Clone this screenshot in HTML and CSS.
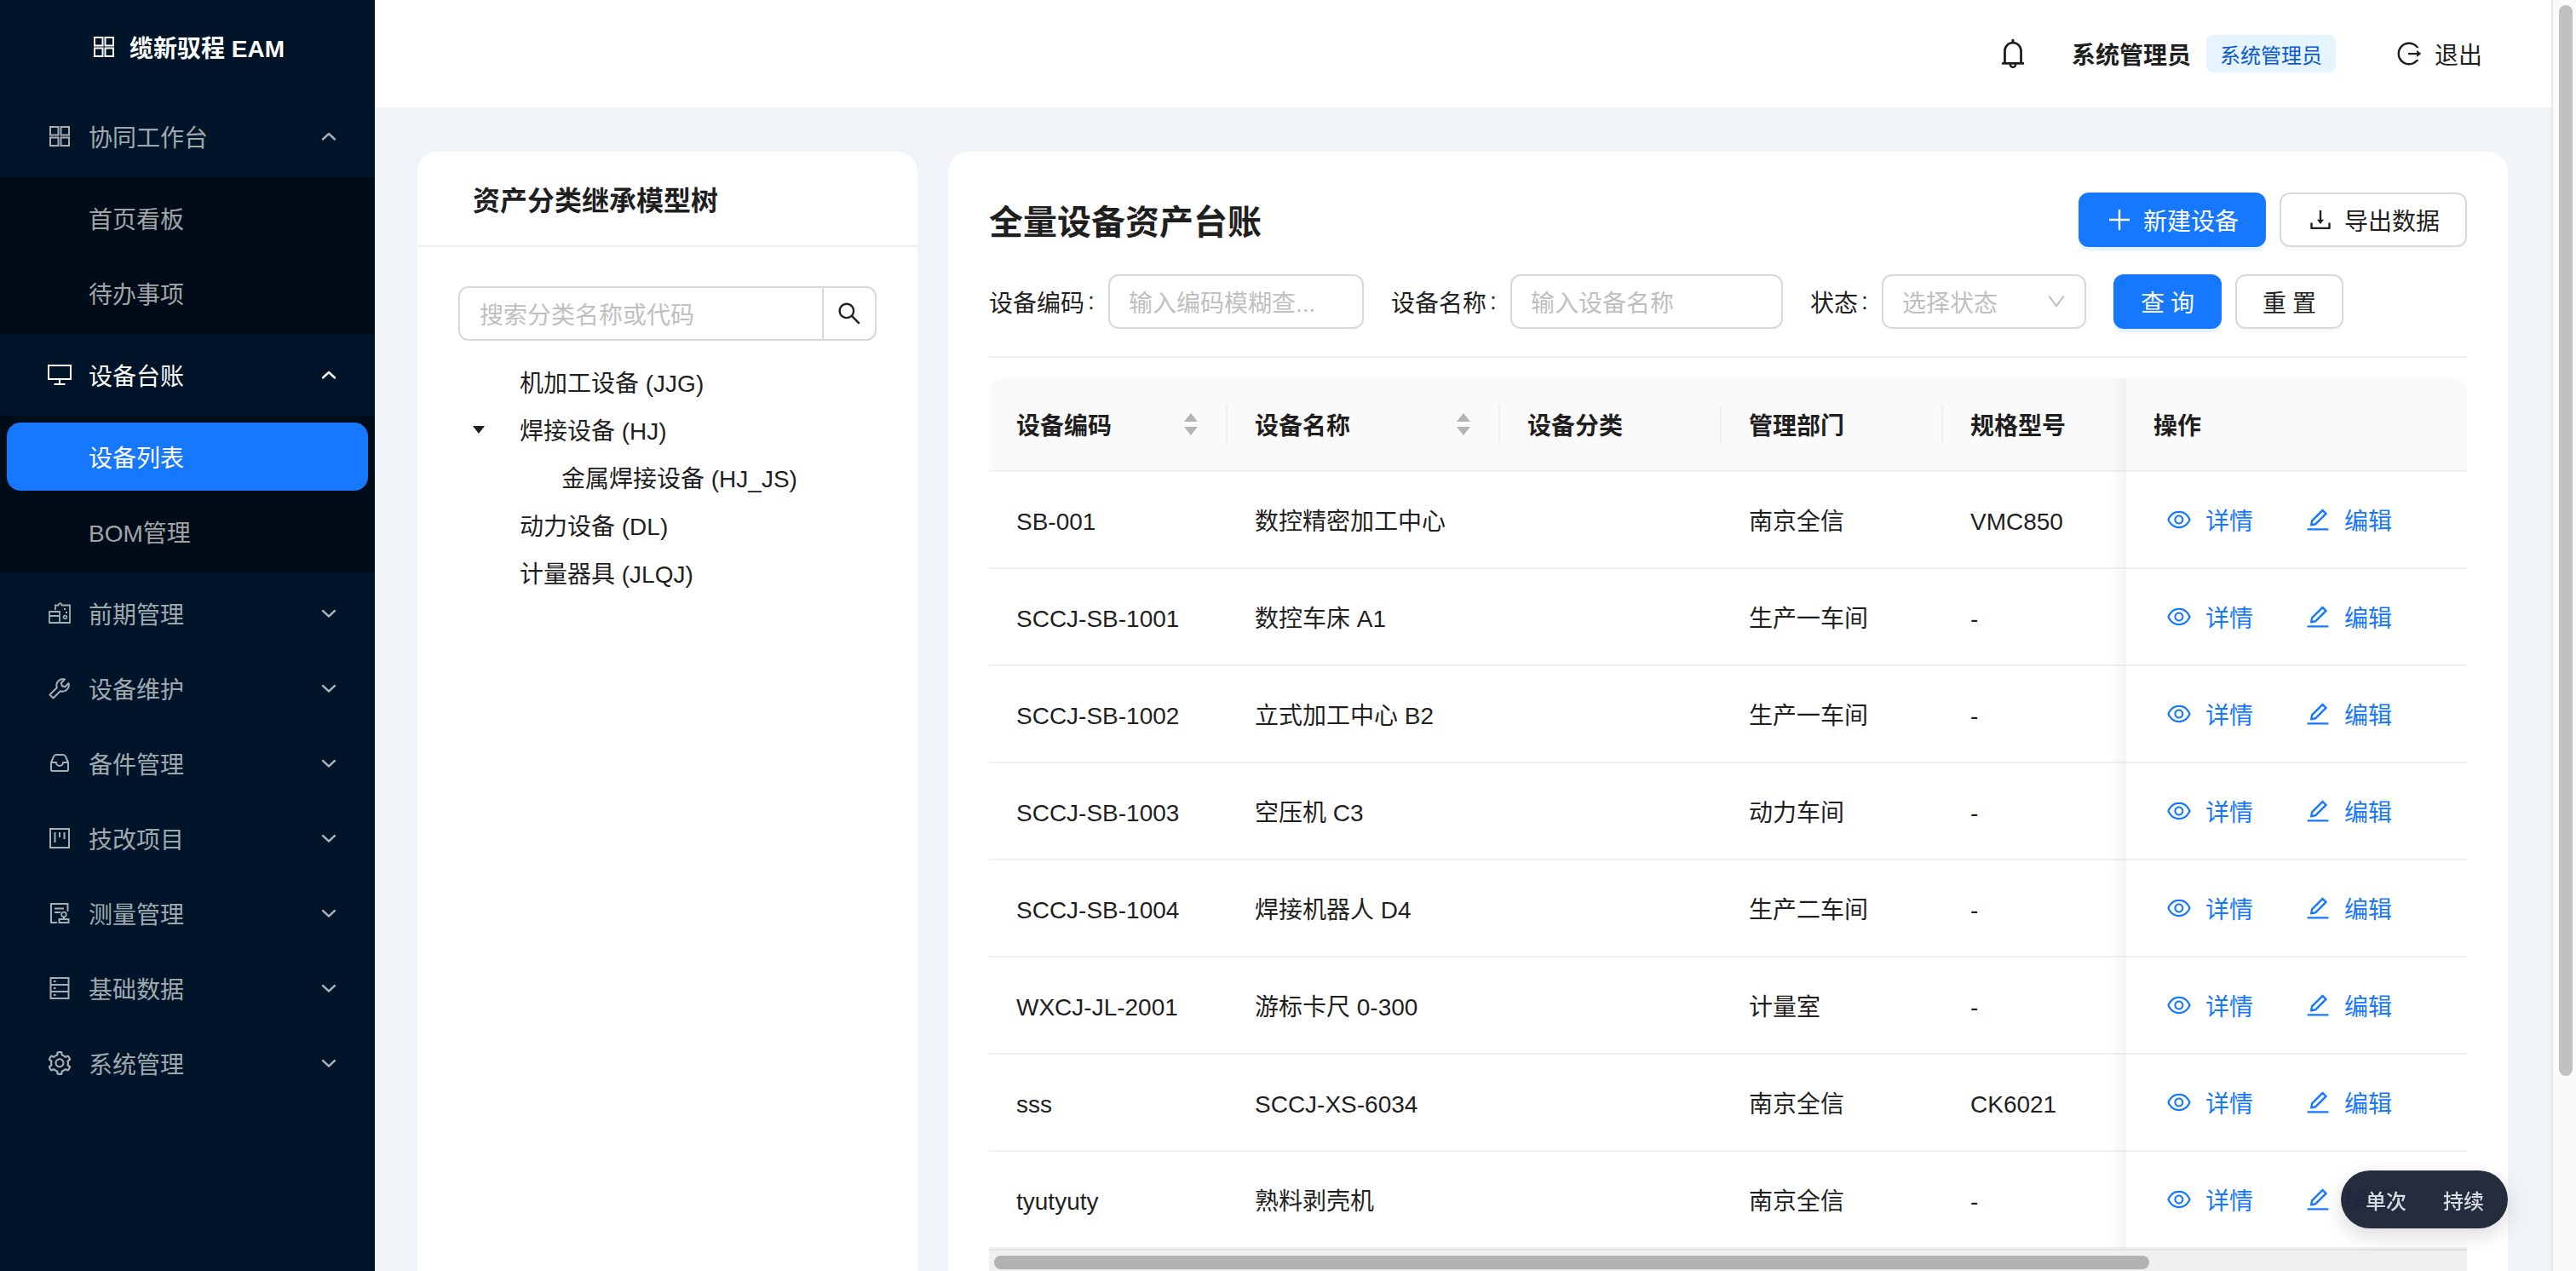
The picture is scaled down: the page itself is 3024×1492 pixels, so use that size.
FILE: index.html
```html
<!DOCTYPE html>
<html lang="zh-CN">
<head>
  <meta charset="UTF-8">
  <meta name="viewport" content="width=device-width, initial-scale=1.0">
  <title>缆新驭程 EAM</title>
  <link rel="stylesheet" href="styles.css">
</head>
<body>

  <!-- icon sprite -->
  <svg class="sprite" xmlns="http://www.w3.org/2000/svg">
    <symbol id="i-app" viewBox="-2 -2 32 32"><path fill="none" stroke="currentColor" stroke-width="2" d="M3 3h9.500v9.500H3zM15.500 3H25v9.500h-9.500zM3 15.500h9.500V25H3zM15.500 15.500H25V25h-9.500z"/></symbol>
    <symbol id="i-desktop" viewBox="-2 -2 32 32"><path fill="none" stroke="currentColor" stroke-width="2" d="M1 3h26v16H1zM14 19v6M7.500 25h13"/></symbol>
    <symbol id="i-recon" viewBox="-2 -2 32 32"><path fill="none" stroke="currentColor" stroke-width="1.800" d="M9 10V4.500h3.500a2 2 0 0 1 3.500-1.500 2 2 0 0 1 .5 1.500H26V25H14M2 12h12v13H2zM2 17h12"/><circle cx="20.500" cy="18.500" r="2" fill="none" stroke="currentColor" stroke-width="1.600"/><path fill="none" stroke="currentColor" stroke-width="2" d="M19 9h2M21 13h2"/></symbol>
    <symbol id="i-tool" viewBox="-2 -2 32 32"><path fill="none" stroke="currentColor" stroke-width="2" stroke-linejoin="round" d="M20 3.500A7.500 7.500 0 0 0 10.800 13.200L2.500 21.500l4 4 8.300-8.300A7.500 7.500 0 0 0 24.500 8l-4.200 4.200-3.500-1-1-3.500z"/></symbol>
    <symbol id="i-inbox" viewBox="-2 -2 32 32"><path fill="none" stroke="currentColor" stroke-width="2" stroke-linejoin="round" d="M4 13l3-7q1-2 3-2h8q2 0 3 2l3 7v8.500q0 1.500-1.500 1.500h-17Q4 23 4 21.500zM4 13h6a4 4 0 0 0 8 0h6"/></symbol>
    <symbol id="i-project" viewBox="-2 -2 32 32"><path fill="none" stroke="currentColor" stroke-width="2" d="M3 3h22v22H3zM8.500 7v12M14 7v6M19.500 7v8"/></symbol>
    <symbol id="i-audit" viewBox="-2 -2 32 32"><path fill="none" stroke="currentColor" stroke-width="2" d="M23.500 12V3H4v22h7M8 8.500h11M8 13h7"/><circle cx="19" cy="15.500" r="2.800" fill="none" stroke="currentColor" stroke-width="1.800"/><path fill="none" stroke="currentColor" stroke-width="2" d="M19 18.500V21M13.500 21h11v4h-11z"/></symbol>
    <symbol id="i-hdd" viewBox="-2 -2 32 32"><path fill="none" stroke="currentColor" stroke-width="2" d="M3.500 2h21v24h-21zM3.500 10h21M3.500 18h21M7 6h2.500M7 14h2.500M7 22h2.500"/></symbol>
    <symbol id="i-gear" viewBox="0 0 1024 1024"><path fill="currentColor" d="M924.8 625.7l-65.5-56c3.1-19 4.700-38.400 4.700-57.800s-1.600-38.800-4.700-57.800l65.500-56a32.030 32.030 0 0 0 9.300-35.200l-.9-2.600a443.740 443.740 0 0 0-79.700-137.900l-1.800-2.100a32.120 32.120 0 0 0-35.100-9.500l-81.300 28.900c-30-24.600-63.500-44-99.700-57.600l-15.700-85a32.050 32.050 0 0 0-25.800-25.700l-2.700-.5c-52.100-9.400-106.900-9.400-159 0l-2.700.5a32.050 32.050 0 0 0-25.800 25.700l-15.800 85.400a351.860 351.860 0 0 0-99 57.400l-81.900-29.100a32 32 0 0 0-35.100 9.500l-1.800 2.100a446.020 446.020 0 0 0-79.700 137.900l-.9 2.600c-4.500 12.500-.8 26.500 9.300 35.200l66.300 56.600c-3.100 18.800-4.600 38-4.600 57.100 0 19.200 1.500 38.400 4.600 57.100L99 625.500a32.030 32.030 0 0 0-9.300 35.200l.9 2.600c18.100 50.400 44.900 96.900 79.700 137.900l1.800 2.100a32.120 32.120 0 0 0 35.100 9.500l81.900-29.100c29.800 24.500 63.100 43.900 99 57.400l15.800 85.400a32.050 32.050 0 0 0 25.800 25.700l2.700.5a449.400 449.400 0 0 0 159 0l2.700-.5a32.050 32.050 0 0 0 25.800-25.700l15.700-85a350 350 0 0 0 99.700-57.600l81.300 28.900a32 32 0 0 0 35.100-9.500l1.800-2.100c34.800-41.100 61.600-87.500 79.700-137.900l.9-2.600c4.500-12.300.8-26.300-9.300-35zM788.300 465.900c2.500 15.100 3.800 30.600 3.800 46.100s-1.300 31-3.800 46.100l-6.600 40.100 74.700 63.900a370.030 370.030 0 0 1-42.600 73.600L721 702.800l-31.400 25.800c-23.900 19.600-50.500 35-79.300 45.800l-38.100 14.300-17.900 97a377.500 377.500 0 0 1-85 0l-17.900-97.200-37.800-14.500c-28.500-10.800-55-26.200-78.700-45.700l-31.400-25.900-93.400 33.200c-17-22.900-31.200-47.600-42.600-73.600l75.500-64.500-6.500-40c-2.400-14.900-3.700-30.300-3.700-45.500 0-15.300 1.200-30.600 3.700-45.500l6.500-40-75.500-64.500c11.300-26.100 25.600-50.700 42.600-73.600l93.400 33.200 31.400-25.900c23.700-19.500 50.200-34.900 78.700-45.700l37.900-14.300 17.900-97.200c28.100-3.200 56.800-3.200 85 0l17.900 97 38.100 14.300c28.700 10.800 55.400 26.200 79.300 45.800l31.400 25.800 92.800-32.900c17 22.900 31.200 47.600 42.600 73.600L781.800 426l6.500 39.900zM512 326c-97.200 0-176 78.800-176 176s78.800 176 176 176 176-78.800 176-176-78.800-176-176-176zm79.200 255.200A111.600 111.600 0 0 1 512 614c-29.900 0-58-11.700-79.200-32.800A111.600 111.600 0 0 1 400 502c0-29.900 11.700-58 32.800-79.200C454 401.600 482.100 390 512 390c29.900 0 58 11.600 79.200 32.800A111.600 111.600 0 0 1 624 502c0 29.900-11.700 58-32.800 79.200z"/></symbol>
    <symbol id="i-up" viewBox="0 0 20 20"><path fill="none" stroke="currentColor" stroke-width="2.400" stroke-linecap="round" stroke-linejoin="round" d="M3 13.500L10 7l7 6.500"/></symbol>
    <symbol id="i-down" viewBox="0 0 20 20"><path fill="none" stroke="currentColor" stroke-width="2.400" stroke-linecap="round" stroke-linejoin="round" d="M3 7l7 6.500L17 7"/></symbol>
    <symbol id="i-select" viewBox="0 0 1024 1024"><path fill="currentColor" d="M884 256h-75c-5.100 0-9.900 2.500-12.900 6.600L512 654.200 227.900 262.600c-3-4.100-7.800-6.600-12.900-6.600h-75c-6.500 0-10.300 7.400-6.500 12.700l352.600 486.100c12.800 17.600 39 17.600 51.700 0l352.600-486.100c3.900-5.300.1-12.700-6.400-12.700z"/></symbol>
    <symbol id="i-bell" viewBox="0 0 1024 1024"><path fill="currentColor" d="M816 768h-24V428c0-141.100-104.300-257.700-240-277.100V112c0-22.100-17.900-40-40-40s-40 17.900-40 40v38.900c-135.700 19.400-240 136-240 277.100v340h-24c-17.700 0-32 14.300-32 32v32c0 4.400 3.600 8 8 8h216c0 61.800 50.200 112 112 112s112-50.200 112-112h216c4.400 0 8-3.600 8-8v-32c0-17.700-14.300-32-32-32zM512 888c-26.500 0-48-21.500-48-48h96c0 26.500-21.500 48-48 48zM304 768V428c0-55.600 21.600-107.800 60.900-147.100S456.400 220 512 220c55.600 0 107.800 21.600 147.100 60.900S720 372.400 720 428v340H304z"/></symbol>
    <symbol id="i-logout" viewBox="0 0 1024 1024"><path fill="currentColor" d="M868 732h-70.300c-4.800 0-9.300 2.100-12.300 5.800-7 8.500-14.500 16.700-22.400 24.500a353.840 353.840 0 0 1-112.700 75.900A352.800 352.800 0 0 1 512.400 866c-47.900 0-94.300-9.400-137.900-27.800a353.840 353.840 0 0 1-112.700-75.900 353.280 353.280 0 0 1-76-112.500C167.300 606.200 158 559.900 158 512s9.400-94.200 27.800-137.800c17.800-42.100 43.400-80 76-112.500s70.500-58.100 112.700-75.900c43.600-18.400 90-27.800 137.900-27.800 47.900 0 94.300 9.300 137.900 27.800 42.200 17.800 80.100 43.400 112.700 75.900 7.900 7.900 15.300 16.100 22.400 24.500 3 3.700 7.600 5.800 12.300 5.800H868c6.300 0 10.200-7 6.700-12.300C798 160.500 663.800 81.600 511.300 82 271.700 82.600 79.600 277.100 82 516.400 84.400 751.900 276.200 942 512.400 942c152.100 0 285.700-78.800 362.300-197.700 3.400-5.300-.4-12.300-6.700-12.300zm88.900-226.300L815 393.700c-5.300-4.200-13-.4-13 6.300v76H488c-4.400 0-8 3.600-8 8v56c0 4.400 3.600 8 8 8h314v76c0 6.700 7.800 10.500 13 6.300l141.900-112a8 8 0 0 0 0-12.600z"/></symbol>
    <symbol id="i-plus" viewBox="0 0 32 32"><path fill="none" stroke="currentColor" stroke-width="2.400" d="M16 4v24M4 16h24"/></symbol>
    <symbol id="i-download" viewBox="0 0 1024 1024"><path fill="currentColor" d="M505.700 661a8 8 0 0 0 12.600 0l112-141.700c4.100-5.200.4-12.900-6.300-12.900h-74.100V168c0-4.400-3.600-8-8-8h-60c-4.400 0-8 3.600-8 8v338.300H400c-6.700 0-10.400 7.700-6.300 12.900l112 141.800zM878 626h-60c-4.400 0-8 3.600-8 8v154H214V634c0-4.400-3.600-8-8-8h-60c-4.400 0-8 3.600-8 8v198c0 17.700 14.300 32 32 32h684c17.700 0 32-14.300 32-32V634c0-4.400-3.600-8-8-8z"/></symbol>
    <symbol id="i-search" viewBox="0 0 1024 1024"><path fill="currentColor" d="M909.600 854.500L649.900 594.800C690.200 542.700 712 479 712 412c0-80.200-31.300-155.400-87.900-212.100-56.600-56.700-132-87.900-212.100-87.900s-155.500 31.300-212.100 87.900C143.200 256.500 112 331.800 112 412c0 80.100 31.300 155.500 87.900 212.100C256.500 680.800 331.800 712 412 712c67 0 130.600-21.800 182.700-62l259.700 259.600a8.200 8.200 0 0 0 11.600 0l43.600-43.500a8.200 8.200 0 0 0 0-11.600zM570.400 570.400C528 612.700 471.800 636 412 636s-116-23.300-158.400-65.600C211.300 528 188 471.800 188 412s23.300-116.100 65.600-158.400C296 211.300 352.200 188 412 188s116.100 23.200 158.400 65.600S636 352.200 636 412s-23.300 116.100-65.600 158.400z"/></symbol>
    <symbol id="i-eye" viewBox="0 0 1024 1024"><path fill="currentColor" d="M942.200 486.200C847.400 286.500 704.100 186 512 186c-192.200 0-335.400 100.500-430.200 300.300a60.300 60.300 0 0 0 0 51.500C176.600 737.500 319.900 838 512 838c192.200 0 335.400-100.500 430.200-300.300 7.700-16.200 7.700-35 0-51.500zM512 766c-161.300 0-279.400-81.800-362.700-254C232.600 339.800 350.700 258 512 258c161.300 0 279.400 81.800 362.700 254C791.500 684.200 673.400 766 512 766zm-4-430c-97.200 0-176 78.800-176 176s78.800 176 176 176 176-78.800 176-176-78.800-176-176-176zm0 288c-61.900 0-112-50.100-112-112s50.100-112 112-112 112 50.100 112 112-50.100 112-112 112z"/></symbol>
    <symbol id="i-edit" viewBox="0 0 1024 1024"><path fill="currentColor" d="M257.700 752c2 0 4-.2 6-.5L431.900 722c2-.4 3.900-1.300 5.300-2.800l423.900-423.900a9.960 9.960 0 0 0 0-14.100L694.900 114.900c-1.900-1.900-4.400-2.900-7.100-2.900s-5.200 1-7.100 2.900L256.800 538.800c-1.500 1.500-2.400 3.300-2.800 5.300l-29.500 168.200a33.500 33.500 0 0 0 9.400 29.800c6.600 6.400 14.900 9.900 23.800 9.900zm67.400-174.400L687.800 215l73.300 73.300-362.700 362.600-88.900 15.700 15.600-89zM880 836H144c-17.700 0-32 14.300-32 32v36c0 4.400 3.600 8 8 8h784c4.400 0 8-3.600 8-8v-36c0-17.700-14.300-32-32-32z"/></symbol>
  </svg>

  <div class="app">

    <aside class="sidebar">
      <div class="logo"><svg class="icon"><use href="#i-app"/></svg><span>缆新驭程 EAM</span></div>

      <div class="menu-item"><svg class="icon"><use href="#i-app"/></svg><span>协同工作台</span><svg class="arrow"><use href="#i-up"/></svg></div>
      <div class="submenu">
        <div class="sub-item">首页看板</div>
        <div class="sub-item">待办事项</div>
      </div>

      <div class="menu-item open"><svg class="icon"><use href="#i-desktop"/></svg><span>设备台账</span><svg class="arrow"><use href="#i-up"/></svg></div>
      <div class="submenu">
        <div class="sub-item active">设备列表</div>
        <div class="sub-item">BOM管理</div>
      </div>

      <div class="menu-item"><svg class="icon"><use href="#i-recon"/></svg><span>前期管理</span><svg class="arrow"><use href="#i-down"/></svg></div>
      <div class="menu-item"><svg class="icon"><use href="#i-tool"/></svg><span>设备维护</span><svg class="arrow"><use href="#i-down"/></svg></div>
      <div class="menu-item"><svg class="icon"><use href="#i-inbox"/></svg><span>备件管理</span><svg class="arrow"><use href="#i-down"/></svg></div>
      <div class="menu-item"><svg class="icon"><use href="#i-project"/></svg><span>技改项目</span><svg class="arrow"><use href="#i-down"/></svg></div>
      <div class="menu-item"><svg class="icon"><use href="#i-audit"/></svg><span>测量管理</span><svg class="arrow"><use href="#i-down"/></svg></div>
      <div class="menu-item"><svg class="icon"><use href="#i-hdd"/></svg><span>基础数据</span><svg class="arrow"><use href="#i-down"/></svg></div>
      <div class="menu-item"><svg class="icon"><use href="#i-gear"/></svg><span>系统管理</span><svg class="arrow"><use href="#i-down"/></svg></div>
    </aside>

    <div class="main">
      <header class="topbar">
        <svg class="bell"><use href="#i-bell"/></svg>
        <span class="user-name">系统管理员</span>
        <span class="role-tag">系统管理员</span>
        <span class="logout"><svg class="icon"><use href="#i-logout"/></svg>退出</span>
      </header>

      <div class="content">
        <section class="card tree-card">
          <div class="tree-title">资产分类继承模型树</div>
          <div class="tree-body">
            <div class="tree-search">
              <span class="tree-search-text">搜索分类名称或代码</span>
              <span class="tree-search-btn"><svg class="icon"><use href="#i-search"/></svg></span>
            </div>
            <div class="tree-row">机加工设备 (JJG)</div>
            <div class="tree-row"><span class="caret"></span>焊接设备 (HJ)</div>
            <div class="tree-row child">金属焊接设备 (HJ_JS)</div>
            <div class="tree-row">动力设备 (DL)</div>
            <div class="tree-row">计量器具 (JLQJ)</div>
          </div>
        </section>

        <section class="card ledger-card">
          <div class="ledger-head">
            <h1>全量设备资产台账</h1>
            <div class="ledger-actions">
              <button class="btn primary"><svg class="icon"><use href="#i-plus"/></svg>新建设备</button>
              <button class="btn"><svg class="icon"><use href="#i-download"/></svg>导出数据</button>
            </div>
          </div>

          <div class="filters">
            <label class="field">设备编码<i>:</i></label>
            <span class="input code-input">输入编码模糊查...</span>
            <label class="field">设备名称<i>:</i></label>
            <span class="input name-input">输入设备名称</span>
            <label class="field">状态<i>:</i></label>
            <span class="input status-input">选择状态<svg class="select-arrow"><use href="#i-select"/></svg></span>
            <button class="btn primary spaced">查询</button>
            <button class="btn spaced">重置</button>
          </div>

          <table class="ledger">
            <colgroup>
              <col class="c-code"><col class="c-name"><col class="c-cat"><col class="c-dept"><col class="c-spec"><col class="c-ops">
            </colgroup>
            <thead>
              <tr>
                <th class="split"><div class="th-sort">设备编码<span class="sorter"><b class="up"></b><b class="dn"></b></span></div></th>
                <th class="split"><div class="th-sort">设备名称<span class="sorter"><b class="up"></b><b class="dn"></b></span></div></th>
                <th class="split">设备分类</th>
                <th class="split">管理部门</th>
                <th>规格型号</th>
                <th class="ops">操作</th>
              </tr>
            </thead>
            <tbody>
              <tr><td>SB-001</td><td>数控精密加工中心</td><td></td><td>南京全信</td><td>VMC850</td><td class="ops"><a class="act"><svg class="icon"><use href="#i-eye"/></svg>详情</a><a class="act"><svg class="icon"><use href="#i-edit"/></svg>编辑</a></td></tr>
              <tr><td>SCCJ-SB-1001</td><td>数控车床 A1</td><td></td><td>生产一车间</td><td>-</td><td class="ops"><a class="act"><svg class="icon"><use href="#i-eye"/></svg>详情</a><a class="act"><svg class="icon"><use href="#i-edit"/></svg>编辑</a></td></tr>
              <tr><td>SCCJ-SB-1002</td><td>立式加工中心 B2</td><td></td><td>生产一车间</td><td>-</td><td class="ops"><a class="act"><svg class="icon"><use href="#i-eye"/></svg>详情</a><a class="act"><svg class="icon"><use href="#i-edit"/></svg>编辑</a></td></tr>
              <tr><td>SCCJ-SB-1003</td><td>空压机 C3</td><td></td><td>动力车间</td><td>-</td><td class="ops"><a class="act"><svg class="icon"><use href="#i-eye"/></svg>详情</a><a class="act"><svg class="icon"><use href="#i-edit"/></svg>编辑</a></td></tr>
              <tr><td>SCCJ-SB-1004</td><td>焊接机器人 D4</td><td></td><td>生产二车间</td><td>-</td><td class="ops"><a class="act"><svg class="icon"><use href="#i-eye"/></svg>详情</a><a class="act"><svg class="icon"><use href="#i-edit"/></svg>编辑</a></td></tr>
              <tr><td>WXCJ-JL-2001</td><td>游标卡尺 0-300</td><td></td><td>计量室</td><td>-</td><td class="ops"><a class="act"><svg class="icon"><use href="#i-eye"/></svg>详情</a><a class="act"><svg class="icon"><use href="#i-edit"/></svg>编辑</a></td></tr>
              <tr><td>sss</td><td>SCCJ-XS-6034</td><td></td><td>南京全信</td><td>CK6021</td><td class="ops"><a class="act"><svg class="icon"><use href="#i-eye"/></svg>详情</a><a class="act"><svg class="icon"><use href="#i-edit"/></svg>编辑</a></td></tr>
              <tr><td>tyutyuty</td><td>熟料剥壳机</td><td></td><td>南京全信</td><td>-</td><td class="ops"><a class="act"><svg class="icon"><use href="#i-eye"/></svg>详情</a><a class="act"><svg class="icon"><use href="#i-edit"/></svg>编辑</a></td></tr>
            </tbody>
          </table>
          <div class="table-scroll"><div class="table-thumb"></div></div>
        </section>
      </div>
    </div>

    <div class="page-scroll"><div class="page-thumb"></div></div>
  </div>

  <div class="float-pill"><span>单次</span><span>持续</span></div>

</body>
</html>
```

FILE: styles.css
```css
* {
  box-sizing: border-box;
}

body {
  margin: 0;
  height: 100vh;
  overflow: hidden;
  font-family: "Liberation Sans", "Noto Sans CJK SC", sans-serif;
  font-size: 28px;
  color: #1f1f1f;
  background-color: #f0f3f8;
}

.sprite {
  display: none;
}

.icon {
  width: 32px;
  height: 32px;
  flex-shrink: 0;
}

.app {
  display: flex;
  height: 100vh;
}

/* sidebar */
.sidebar {
  width: 440px;
  flex-shrink: 0;
  background-color: #001529;
  color: rgba(255, 255, 255, 0.65);
}

.logo {
  height: 112px;
  padding-bottom: 2px;
  display: flex;
  align-items: center;
  justify-content: center;
  gap: 14px;
  color: #fff;
  font-weight: 600;
}

.menu-item {
  height: 80px;
  margin: 8px 8px;
  padding: 0 36px 0 46px;
  display: flex;
  align-items: center;
  gap: 18px;
}

.menu-item.open {
  color: #fff;
}

.menu-item .arrow {
  width: 20px;
  height: 20px;
  margin-left: auto;
}

.submenu {
  background-color: #000c17;
  padding: 8px 0;
}

.sub-item {
  height: 80px;
  margin: 0 8px 8px;
  padding-left: 96px;
  display: flex;
  align-items: center;
  border-radius: 16px;
}

.sub-item:last-child {
  margin-bottom: 0;
}

.sub-item.active {
  background-color: #1677ff;
  color: #fff;
}

/* top bar */
.main {
  flex: 1;
  min-width: 0;
  display: flex;
  flex-direction: column;
}

.topbar {
  height: 126px;
  flex-shrink: 0;
  background-color: #fff;
  display: flex;
  align-items: center;
  padding-right: 81px;
  justify-content: flex-end;
}

.bell {
  width: 40px;
  height: 40px;
  margin-right: 49px;
}

.user-name {
  font-weight: 600;
  margin-right: 18px;
}

.role-tag {
  height: 44px;
  padding: 0 16px;
  display: flex;
  align-items: center;
  font-size: 24px;
  color: #0958d9;
  background-color: #e6f4ff;
  border-radius: 8px;
  margin-right: 70px;
}

.logout {
  display: flex;
  align-items: center;
  gap: 14px;
}

/* content */
.content {
  flex: 1;
  min-height: 0;
  display: flex;
  gap: 36px;
  padding: 52px 51px 0 50px;
  overflow: hidden;
}

.card {
  background-color: #fff;
  border-radius: 24px 24px 0 0;
  height: 1400px;
}

.tree-card {
  width: 587px;
  flex-shrink: 0;
}

.tree-title {
  height: 112px;
  padding-left: 65px;
  display: flex;
  align-items: center;
  font-size: 32px;
  font-weight: 600;
  border-bottom: 2px solid #f0f0f0;
}

.tree-body {
  padding: 46px 48px;
}

.tree-search {
  height: 64px;
  display: flex;
  align-items: center;
  border: 2px solid #d9d9d9;
  border-radius: 12px;
  margin-bottom: 20px;
}

.tree-search-text {
  flex: 1;
  padding-left: 23px;
  color: #bfbfbf;
}

.tree-search-btn {
  width: 62px;
  height: 100%;
  display: flex;
  align-items: center;
  justify-content: center;
  border-left: 2px solid #d9d9d9;
}

.tree-row {
  height: 56px;
  padding-left: 72px;
  display: flex;
  align-items: center;
  position: relative;
}

.tree-row.child {
  padding-left: 121px;
}

.caret {
  position: absolute;
  left: 17px;
  top: 24px;
  border-left: 7px solid transparent;
  border-right: 7px solid transparent;
  border-top: 9px solid #1f1f1f;
}

/* ledger */
.ledger-card {
  flex: 1;
  min-width: 0;
  padding: 48px;
}

.ledger-head {
  display: flex;
  align-items: center;
  justify-content: space-between;
  height: 64px;
  margin-bottom: 32px;
}

.ledger-head h1 {
  margin: 0;
  font-size: 40px;
  font-weight: 600;
}

.ledger-actions {
  display: flex;
  gap: 16px;
}

.btn {
  height: 64px;
  padding: 0 30px;
  display: inline-flex;
  align-items: center;
  gap: 12px;
  font-family: inherit;
  font-size: 28px;
  color: #1f1f1f;
  background-color: #fff;
  border: 2px solid #d9d9d9;
  border-radius: 12px;
  box-shadow: 0 4px 0 rgba(0, 0, 0, 0.02);
}

.btn.primary {
  color: #fff;
  background-color: #1677ff;
  border-color: #1677ff;
  box-shadow: 0 4px 0 rgba(5, 145, 255, 0.1);
}

.btn.spaced {
  letter-spacing: 7px;
  padding-right: 23px;
  margin-left: 16px;
}

.btn.primary.spaced {
  margin-left: 32px;
}

.filters {
  display: flex;
  align-items: flex-start;
  height: 98px;
  padding-bottom: 32px;
  border-bottom: 2px solid #f0f0f0;
  margin-bottom: 24px;
}

.field {
  height: 64px;
  display: flex;
  align-items: center;
  white-space: nowrap;
}

.field i {
  width: 8px;
  font-style: normal;
  margin: 0 16px 0 4px;
}

.input {
  height: 64px;
  display: flex;
  align-items: center;
  padding: 0 22px;
  color: #bfbfbf;
  background-color: #fff;
  border: 2px solid #d9d9d9;
  border-radius: 12px;
  margin-right: 32px;
  white-space: nowrap;
}

.code-input {
  width: 300px;
}

.name-input {
  width: 320px;
}

.status-input {
  width: 240px;
  margin-right: 0;
}

.select-arrow {
  width: 26px;
  height: 26px;
  margin-left: auto;
  margin-right: -2px;
}

.ledger {
  width: 1735px;
  table-layout: fixed;
  border-collapse: separate;
  border-spacing: 0;
}

.c-code {
  width: 280px;
}

.c-name {
  width: 320px;
}

.c-cat,
.c-dept {
  width: 260px;
}

.c-spec {
  width: 215px;
}

.c-ops {
  width: 400px;
}

.ledger th,
.ledger td {
  padding: 0 32px;
  text-align: left;
  border-bottom: 2px solid #f0f0f0;
  white-space: nowrap;
}

/* keeps latin-only cells on the same baseline as the chinese ones */
.ledger td:not(.ops)::after {
  content: "\200b";
  font-family: "Noto Sans CJK SC", sans-serif;
}

.ledger th {
  height: 110px;
  font-weight: 600;
  background-color: #fafafa;
  position: relative;
}

.ledger td {
  height: 114px;
  background-color: #fff;
}

.ledger th:first-child {
  border-top-left-radius: 16px;
}

.ledger th:last-child {
  border-top-right-radius: 16px;
}

.ledger th.split::after {
  content: "";
  position: absolute;
  right: 0;
  top: 32px;
  width: 2px;
  height: 44px;
  background-color: #f0f0f0;
}

.ledger .ops {
  position: relative;
}

/* shadow of the fixed column */
.ledger .ops::before {
  content: "";
  position: absolute;
  left: -20px;
  top: 0;
  bottom: -2px;
  width: 20px;
  background: linear-gradient(to left, rgba(5, 5, 5, 0.04), rgba(5, 5, 5, 0));
}

.th-sort {
  display: flex;
  align-items: center;
  justify-content: space-between;
  padding-right: 3px;
}

.sorter {
  display: flex;
  flex-direction: column;
  gap: 6px;
}

.sorter b {
  display: block;
  border-left: 8.500px solid transparent;
  border-right: 8.500px solid transparent;
}

.sorter .up {
  border-bottom: 10px solid #b4b4b4;
}

.sorter .dn {
  border-top: 10px solid #b4b4b4;
}

.act {
  display: inline-flex;
  align-items: center;
  vertical-align: top;
  gap: 15px;
  padding: 0 14px;
  margin-right: 32px;
  color: #1677ff;
}

.act:last-child {
  margin-right: 0;
}

.table-scroll {
  width: 1735px;
  height: 26px;
  padding: 6px 6px 0;
  background-color: #f0f0f0;
  border-top: 2px solid #e2e2e2;
}

.table-thumb {
  width: 1356px;
  height: 16px;
  border-radius: 8px;
  background-color: #b2b2b2;
}

/* page scrollbar */
.page-scroll {
  width: 29px;
  flex-shrink: 0;
  padding: 6px 6px 0 7px;
  background-color: #fafafa;
  border-left: 2px solid #e8e8e8;
}

.page-thumb {
  width: 16px;
  height: 1257px;
  border-radius: 8px;
  background-color: #c1c1c1;
}

/* floating switch over the table */
.float-pill {
  position: fixed;
  right: 80px;
  bottom: 50px;
  width: 196px;
  height: 68px;
  padding: 0 28px 0 29px;
  display: flex;
  align-items: center;
  justify-content: space-between;
  font-size: 24px;
  font-weight: 500;
  color: #d8dbe2;
  background-color: rgba(30, 37, 56, 0.97);
  border-radius: 34px;
  box-shadow: 0 8px 24px rgba(0, 0, 0, 0.15);
}
```
